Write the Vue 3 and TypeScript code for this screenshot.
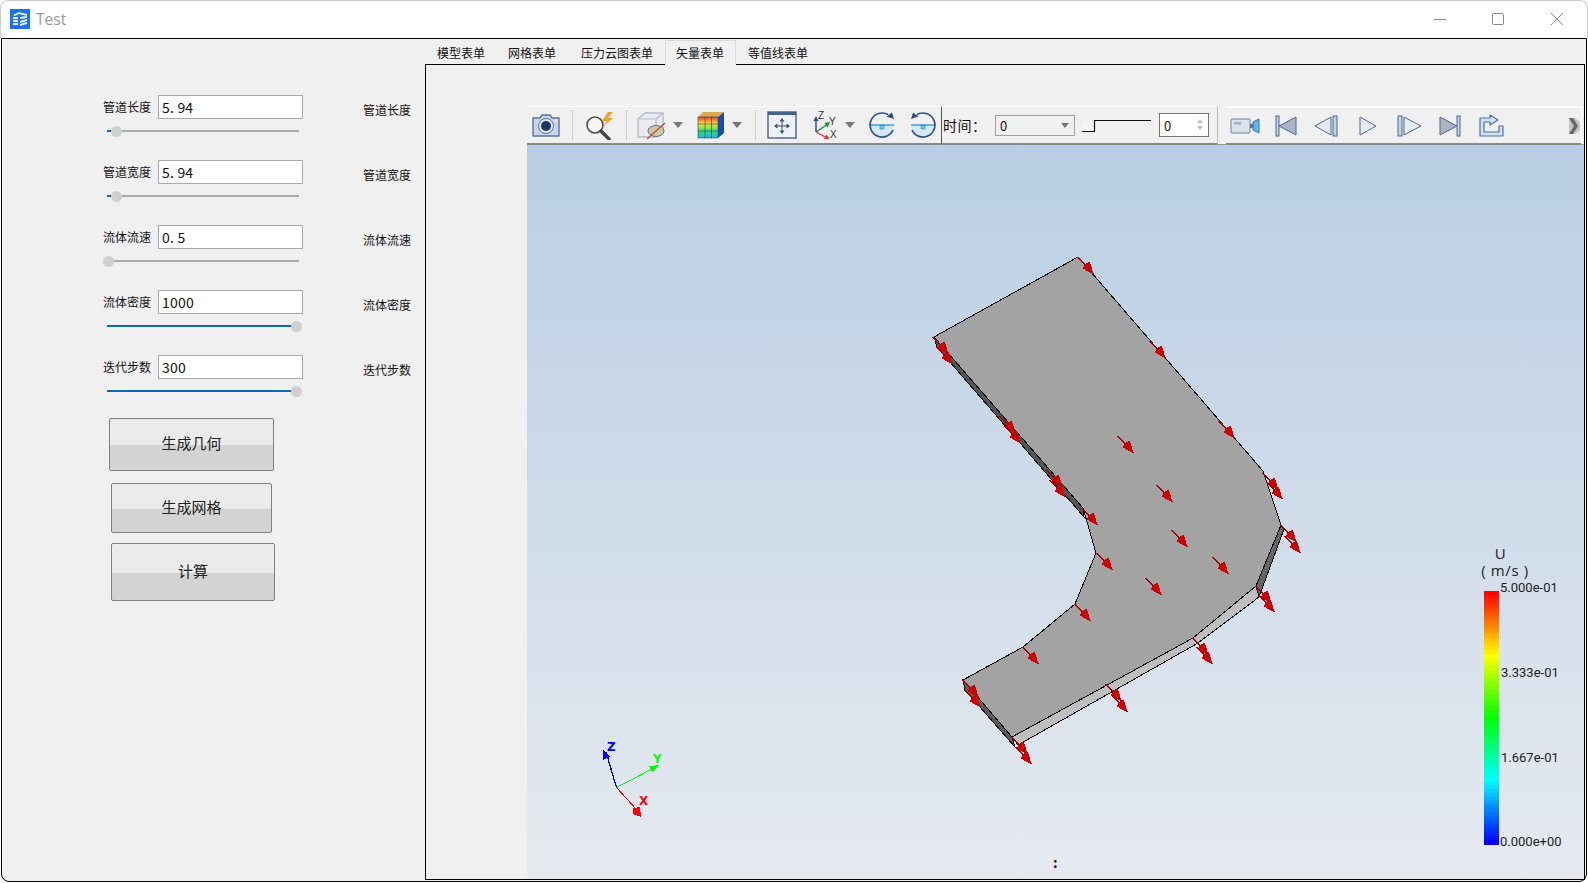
<template>
  <div class="window">
    <header class="titlebar">
      <svg class="app-icon" viewBox="0 0 20 20">
        <rect width="20" height="20" fill="#1a73e8" />
        <path d="M3 6 L9 3 L17 5 L17 7 L9 5 L5 7 Z M3 8 h5 v2 h-5 Z M10 8 L17 7 V9 L10 10 Z M3 11 h5 v2 h-5 Z M10 12 L17 10 V12 L10 14 Z M3 14 h5 v2 h-5 Z M10 15 L17 13 V15 L10 17 Z" fill="#e8f1fd" />
      </svg>
      <span class="app-title">Test</span>
      <div class="win-buttons">
        <svg class="win-min" viewBox="0 0 12 12" width="12" height="12"><path d="M0 6.5 H12" stroke="#8a8a8a" /></svg>
        <svg viewBox="0 0 12 12" width="12" height="12"><rect x="0.5" y="0.5" width="11" height="11" rx="1" fill="none" stroke="#8a8a8a" /></svg>
        <svg viewBox="0 0 12 12" width="12" height="12"><path d="M0 0 L12 12 M12 0 L0 12" stroke="#8a8a8a" /></svg>
      </div>
    </header>

    <main class="client">
      <aside class="side">
        <div class="form">
          <div v-for="row in rows" :key="row.label" class="row">
            <div class="row-top">
              <label class="row-label">{{ row.label }}</label>
              <div class="row-input">{{ row.value }}</div>
              <span class="row-echo">{{ row.label }}</span>
            </div>
            <div class="slider">
              <div class="slider-fill" :style="{ width: row.fill + 'px' }" />
              <div class="slider-knob" :style="{ left: row.knob + 'px' }" />
            </div>
          </div>
        </div>
        <button class="btn btn-geo">生成几何</button>
        <button class="btn btn-mesh">生成网格</button>
        <button class="btn btn-run">计算</button>
      </aside>

      <section class="tabs">
        <nav class="tab-bar">
          <span v-for="tab in tabs" :key="tab" class="tab" :class="{ 'tab--on': tab === '矢量表单' }">{{ tab }}</span>
        </nav>
        <div class="pane">
          <div class="viewer">
            <div class="toolbar">
              <div class="tool-group">
                <span class="tool tool-cam">
                  <svg viewBox="0 0 30 26" width="30" height="26">
                    <path d="M2 6 H9 L11 3 H19 L21 6 H28 V24 H2 Z" fill="#c5d5ea" stroke="#5d7397" stroke-width="1.4" stroke-linejoin="round" />
                    <circle cx="15" cy="14" r="7.5" fill="#dfe8f3" stroke="#5d7397" />
                    <circle cx="15" cy="14" r="5" fill="#1b3768" />
                    <circle cx="25" cy="8.5" r="1" fill="#fff" />
                  </svg>
                </span>
                <i class="sep sep-a" />
                <span class="tool tool-zoom">
                  <svg viewBox="0 0 32 30" width="32" height="30">
                    <circle cx="11" cy="15" r="8" fill="#f4f6f8" stroke="#4d4d4d" stroke-width="1.6" />
                    <path d="M17 21 L25 29" stroke="#444" stroke-width="3.4" stroke-linecap="round" />
                    <path d="M24 2 L18 11 H23 L19 17 L29 8 H24 L29 2 Z" fill="#eda12e" />
                  </svg>
                </span>
                <i class="sep sep-b" />
                <span class="tool tool-box">
                  <svg viewBox="0 0 32 30" width="32" height="30">
                    <path d="M2 9 L9 3 H27 V20 L20 27 H2 Z" fill="#e9ebef" stroke="#b4bccb" stroke-width="1.4" />
                    <path d="M2 9 H20 V27 M20 9 L27 3" fill="none" stroke="#b4bccb" stroke-width="1.2" />
                    <ellipse cx="20" cy="21" rx="8" ry="5.5" fill="#cfc6a2" stroke="#5d7397" />
                    <path d="M11 29 L29 13" stroke="#c9452a" stroke-width="1.2" />
                  </svg>
                </span>
                <span class="caret caret-a" />
                <span class="tool tool-cube">
                  <svg viewBox="0 0 28 28" width="28" height="28">
                    <defs>
                      <linearGradient id="cubeFace" x1="0" y1="0" x2="0" y2="1">
                        <stop offset="0" stop-color="#f0402a" />
                        <stop offset="0.33" stop-color="#fbe32e" />
                        <stop offset="0.66" stop-color="#35e06a" />
                        <stop offset="1" stop-color="#22b4e8" />
                      </linearGradient>
                    </defs>
                    <path d="M1 6 L6 1 H27 L21 6 Z" fill="#e0a84e" />
                    <path d="M21 6 L27 1 V22 L21 27 Z" fill="#1a4bb0" />
                    <rect x="1" y="6" width="20" height="21" fill="url(#cubeFace)" />
                    <path d="M1 13 H21 M1 20 H21 M8 6 V27 M14.5 6 V27 M21 6 V27 M1 6 H21 M1 27 H21 M1 6 V27" stroke="#23406e" stroke-width="0.6" fill="none" />
                  </svg>
                </span>
                <span class="caret caret-b" />
                <i class="sep sep-c" />
                <span class="tool tool-fit">
                  <svg viewBox="0 0 30 28" width="30" height="28">
                    <rect x="1" y="1" width="28" height="26" fill="#eef1f5" stroke="#48618c" stroke-width="1.4" />
                    <rect x="1" y="1" width="28" height="3" fill="#48618c" />
                    <path d="M15 8 V22 M8 15 H22" stroke="#33507f" />
                    <path d="M15 7 L12.5 10.5 H17.5 Z M15 23 L12.5 19.5 H17.5 Z M7 15 L10.5 12.5 V17.5 Z M23 15 L19.5 12.5 V17.5 Z" fill="#33507f" />
                  </svg>
                </span>
                <span class="tool tool-axes">
                  <svg viewBox="0 0 30 30" width="30" height="30">
                    <path d="M8 22 V9" stroke="#1f4aa0" stroke-width="1.4" />
                    <path d="M8 6 L5.5 11 H10.5 Z" fill="#1f4aa0" />
                    <path d="M8 22 L20 14" stroke="#1a8a3a" stroke-width="1.4" />
                    <path d="M22 12 L16.5 13 L19.5 17.5 Z" fill="#1a8a3a" />
                    <path d="M8 22 L19 28" stroke="#e03030" stroke-width="1.4" />
                    <path d="M21.5 29 L16 29 L18.5 24.5 Z" fill="#e03030" />
                    <text x="10" y="9" class="axis-glyph">Z</text>
                    <text x="21" y="15" class="axis-glyph">Y</text>
                    <text x="22" y="28" class="axis-glyph">X</text>
                  </svg>
                </span>
                <span class="caret caret-c" />
                <span class="tool tool-rot">
                  <svg viewBox="0 0 30 30" width="30" height="30">
                    <path d="M3 15 A12 12 0 0 0 27 15 Z" fill="#d4e9f8" />
                    <path d="M13 15 H17 V19 H13 Z" fill="#7fbce8" stroke="#1d86d0" stroke-width="0.6" />
                    <path d="M3 15 H27" stroke="#1d86d0" stroke-width="1.2" />
                    <path d="M21 4.6 A12 12 0 1 0 26 20" fill="none" stroke="#2e4f80" stroke-width="1.7" />
                    <path d="M27 9 L19.5 6.5 L25 2.5 Z" fill="#2e4f80" />
                  </svg>
                </span>
                <span class="tool tool-rot">
                  <svg viewBox="0 0 30 30" width="30" height="30">
                    <path d="M3 15 A12 12 0 0 0 27 15 Z" fill="#d4e9f8" />
                    <path d="M13 15 H17 V19 H13 Z" fill="#7fbce8" stroke="#1d86d0" stroke-width="0.6" />
                    <path d="M3 15 H27" stroke="#1d86d0" stroke-width="1.2" />
                    <path d="M9 4.6 A12 12 0 1 1 4 20" fill="none" stroke="#2e4f80" stroke-width="1.7" />
                    <path d="M3 9 L10.5 6.5 L5 2.5 Z" fill="#2e4f80" />
                  </svg>
                </span>
              </div>
              <div class="time-group">
                <span class="time-label">时间：</span>
                <div class="combo">0<span class="combo-caret" /></div>
                <div class="time-slider">
                  <svg viewBox="0 0 70 14" width="70" height="14">
                    <rect x="0" y="3" width="13" height="10" fill="#f6f6f6" />
                    <path d="M0 13.5 H12.5 V2.5 H69" fill="none" stroke="#111" stroke-width="1.2" />
                  </svg>
                </div>
                <div class="spin">0
                  <span class="spin-arrows"><i class="spin-up" /><i class="spin-down" /></span>
                </div>
              </div>
              <div class="play-group">
                <span class="play">
                  <svg viewBox="0 0 30 18" width="30" height="18">
                    <rect x="1" y="2" width="19" height="14" rx="1" fill="#dbe2ec" stroke="#6a7f9f" />
                    <rect x="4" y="5" width="7" height="2.5" fill="#a3b0c2" />
                    <path d="M20 7 H23 V11 H20 Z" fill="#5d7397" />
                    <path d="M23 5 L29 2 V16 L23 13 Z" fill="#62b5e8" stroke="#3a6ea8" />
                  </svg>
                </span>
                <span class="play">
                  <svg viewBox="0 0 24 22" width="24" height="22">
                    <rect x="2" y="1" width="3" height="20" fill="#c6d2e2" stroke="#4f6a93" />
                    <path d="M5 11 L22 2 V20 Z" fill="#aab5c4" stroke="#4f6a93" />
                  </svg>
                </span>
                <span class="play">
                  <svg viewBox="0 0 26 22" width="26" height="22">
                    <path d="M1 11 L17 2 V20 Z" fill="#e6ebf2" stroke="#4f6a93" />
                    <rect x="19" y="1" width="4" height="20" fill="#c6d2e2" stroke="#4f6a93" />
                  </svg>
                </span>
                <span class="play">
                  <svg viewBox="0 0 20 22" width="20" height="22">
                    <path d="M2 2 L18 11 L2 20 Z" fill="#e6ebf2" stroke="#4f6a93" />
                  </svg>
                </span>
                <span class="play">
                  <svg viewBox="0 0 26 22" width="26" height="22">
                    <rect x="2" y="1" width="4" height="20" fill="#c6d2e2" stroke="#4f6a93" />
                    <path d="M8 2 L25 11 L8 20 Z" fill="#e6ebf2" stroke="#4f6a93" />
                  </svg>
                </span>
                <span class="play">
                  <svg viewBox="0 0 24 22" width="24" height="22">
                    <path d="M2 2 L19 11 L2 20 Z" fill="#aab5c4" stroke="#4f6a93" />
                    <rect x="19" y="1" width="3" height="20" fill="#c6d2e2" stroke="#4f6a93" />
                  </svg>
                </span>
                <span class="play">
                  <svg viewBox="0 0 26 24" width="26" height="24">
                    <path d="M12 1 L20 6 L12 11 V8 H6 V18 H21 V12 H25 V22 H2 V4 H12 Z" fill="#d2e0f0" stroke="#4f73a8" stroke-width="1.2" stroke-linejoin="round" />
                  </svg>
                </span>
                <svg class="grip" viewBox="0 0 11 16" width="11" height="16">
                  <rect width="11" height="16" fill="#c4c4c4" />
                  <path d="M0 0 H4 L9 8 L4 16 H0 L5 8 Z" fill="#666" />
                  <path d="M6 0 H11 V4 Z M6 16 H11 V12 Z" fill="#f0f0f0" />
                </svg>
              </div>
            </div>

            <div class="scene">
              <svg class="scene-svg" viewBox="527 145 1057 734" shape-rendering="crispEdges">
                <polygon :points="sliverLeft" fill="#555" stroke="#111" />
                <polygon :points="sliverEnd" fill="#5c5c5c" stroke="#111" />
                <polygon :points="sideLight" fill="#bfbfbf" stroke="#000" />
                <polygon :points="sideDark" fill="#666" stroke="#000" />
                <polygon :points="topFace" fill="#a3a3a3" stroke="#000" />
                <g v-for="(a, i) in arrows" :key="i" :transform="`translate(${a[0]} ${a[1]})`">
                  <path d="M0 0 L15 17" stroke="#a00000" stroke-width="1.5" />
                  <polygon points="7,7 11.5,5 14,11 15,17 9,14 5,11.5" fill="#cc0000" />
                </g>

                <path d="M616.5 787.5 L606 752" stroke="#0000ff" stroke-width="1.3" />
                <polygon points="603,750 603,760 610,757" fill="#0000ff" />
                <path d="M616.5 787.5 L654 768" stroke="#00ff00" stroke-width="1" />
                <polygon points="660,765 649,766 652,772" fill="#00ff00" />
                <path d="M616.5 787.5 L637 810" stroke="#ff0000" stroke-width="1" />
                <polygon points="633,808 640,807 641,817 633,814" fill="#ff0000" />
                <text x="607" y="751" class="triad" fill="#0000ff">Z</text>
                <text x="653" y="763" class="triad" fill="#00ff00">Y</text>
                <text x="639" y="805" class="triad" fill="#ff0000">X</text>

                <rect v-for="(c, i) in bands" :key="c + i" x="1484" :y="591 + i * bandH" width="15" :height="bandH + 0.5" :fill="c" />
              </svg>
              <div class="legend-head">{{ legendTitle }}</div>
              <span class="tick tick-1">5.000e-01</span>
              <span class="tick tick-2">3.333e-01</span>
              <span class="tick tick-3">1.667e-01</span>
              <span class="tick tick-4">0.000e+00</span>
              <span class="colon">:</span>
            </div>
          </div>
        </div>
      </section>
    </main>
  </div>
</template>

<script setup lang="ts">
interface FormRow {
  label: string;
  value: string;
  fill: number;
  knob: number;
}

const rows: FormRow[] = [
  { label: '管道长度', value: '5. 94', fill: 6, knob: 4 },
  { label: '管道宽度', value: '5. 94', fill: 6, knob: 4 },
  { label: '流体流速', value: '0. 5', fill: 0, knob: -4 },
  { label: '流体密度', value: '1000', fill: 186, knob: 184 },
  { label: '迭代步数', value: '300', fill: 186, knob: 184 },
];

const tabs = ['模型表单', '网格表单', '压力云图表单', '矢量表单', '等值线表单'];

const legendTitle = 'U  \n( m/s )';

const topFace =
  '1078,257 934,337 1083,508 1096,553 1075,604 1023,647 963,680 1012,737 1193,638 1256,586 1281,525 1263,471';
const sliverLeft = '934,337 1083,508 1084,517 937,347';
const sliverEnd = '963,680 1012,737 1015,747 965,690';
const sideLight = '1012,737 1193,638 1256,586 1259,597 1198,643 1018,745';
const sideDark = '1281,525 1256,586 1259,597 1284,529';

const arrows: [number, number][] = [
  [1078, 257], [1150, 341], [1219, 421], [1118, 436], [1157, 485],
  [1263, 473], [1267, 482], [933, 337], [937, 347], [1000, 416],
  [1005, 426], [1047, 470], [1050, 480], [1082, 508], [1172, 530],
  [1097, 553], [1146, 578], [1213, 557], [1075, 604], [1023, 647],
  [963, 680], [965, 690], [1281, 525], [1285, 536], [1256, 586],
  [1259, 595], [1193, 638], [1197, 647], [1106, 684], [1112, 695],
  [1012, 737], [1016, 747],
];

// jet style colour table, red at the top down to blue
const bandCount = 64;
const bandH = 253 / bandCount;
const bands = Array.from({ length: bandCount }, (_, i) => {
  const hue = Math.round((i / (bandCount - 1)) * 240);
  return `hsl(${hue} 100% 50%)`;
});
</script>

<style>
html,
body {
  margin: 0;
  background: #fff;
}
</style>

<style scoped>
.window {
  width: 1588px;
  height: 883px;
  display: flex;
  flex-direction: column;
  box-sizing: border-box;
  overflow: hidden;
  background: #fff;
  font-family: "Noto Sans CJK SC", "Liberation Sans", sans-serif;
  color: #111;
}

.titlebar {
  height: 38px;
  flex: none;
  display: flex;
  align-items: center;
  box-sizing: border-box;
  padding: 0 24px 1px 9px;
  border: 1px solid #cfcfcf;
  border-bottom: 0;
  border-radius: 8px 8px 0 0;
}

.app-icon {
  width: 20px;
  height: 20px;
}

.app-title {
  margin-left: 6px;
  font-family: "Open Sans", "Liberation Sans", sans-serif;
  font-size: 15.5px;
  color: #9a9a9a;
}

.win-buttons {
  margin-left: auto;
  display: flex;
  gap: 47px;
}

.win-min {
  margin-right: -1px;
}

.client {
  flex: 1;
  min-height: 0;
  display: flex;
  margin: 0 1px 1px;
  border: 1px solid #000;
  border-radius: 0 0 8px 8px;
  background: #f0f0f0;
}

.side {
  width: 423px;
  flex: none;
  box-sizing: border-box;
  padding-top: 56px;
}

.form {
  height: 323px;
}

.row {
  height: 65px;
  box-sizing: border-box;
}

.row-top {
  display: flex;
  align-items: center;
  height: 24px;
  padding-left: 101px;
}

.row-label {
  width: 55px;
  font-size: 12px;
  line-height: 24px;
  white-space: nowrap;
}

.row-input {
  width: 145px;
  height: 24px;
  box-sizing: border-box;
  border: 1px solid #a9a9a9;
  background: #fff;
  padding: 0 3px;
  font-size: 14px;
  letter-spacing: 0.2px;
  line-height: 22px;
}

.row-echo {
  margin-left: 60px;
  margin-top: 4px;
  font-size: 12px;
  white-space: nowrap;
}

.slider {
  position: relative;
  margin: 11px 0 0 105px;
  width: 192px;
  height: 2px;
  background: #aaa;
}

.slider-fill {
  position: absolute;
  left: 0;
  top: 0;
  height: 2px;
  background: #0f67b8;
}

.slider-knob {
  position: absolute;
  top: -4.5px;
  width: 11px;
  height: 11px;
  border-radius: 50%;
  background: #cfcfcf;
}

.btn {
  display: block;
  box-sizing: border-box;
  padding: 0 0 4px;
  border: 1px solid #808080;
  border-radius: 2px;
  font-family: inherit;
  font-size: 15px;
  color: #222;
}

.btn-geo {
  width: 165px;
  height: 53px;
  margin: 0 0 12px 107px;
  background: linear-gradient(#ebebeb 50%, #d3d3d3 50%);
}

.btn-mesh {
  width: 161px;
  height: 50px;
  margin: 0 0 10px 109px;
  background: linear-gradient(#ebebeb 52%, #d3d3d3 52%);
}

.btn-run {
  width: 164px;
  height: 58px;
  margin-left: 109px;
  background: linear-gradient(#ebebeb 52%, #d3d3d3 52%);
}

.tabs {
  flex: 1;
  min-width: 0;
  display: flex;
  flex-direction: column;
}

.tab-bar {
  height: 25px;
  flex: none;
  box-sizing: border-box;
  display: flex;
  align-items: flex-end;
}

.tab {
  height: 24px;
  box-sizing: border-box;
  padding: 0 12px;
  font-size: 12px;
  line-height: 25px;
  white-space: nowrap;
}

.tab:nth-child(2) {
  padding: 0 13px 0 11px;
}

.tab--on {
  background: #f0f0f0;
  border: 1px solid #d9d9d9;
  border-bottom: 0;
  height: 25px;
  padding: 0 11px 0 10px;
  line-height: 23px;
  position: relative;
  z-index: 1;
  margin-bottom: -1px;
}

.pane {
  flex: 1;
  min-height: 0;
  display: flex;
  border: 1px solid #000;
  margin: 0 1px 1px 0;
  padding: 41px 0 0 101px;
}

.viewer {
  flex: 1;
  min-width: 0;
  display: flex;
  flex-direction: column;
}

.toolbar {
  height: 39px;
  flex: none;
  display: flex;
  align-items: stretch;
  box-sizing: border-box;
  box-shadow: inset 0 -1px 0 #9a9a9a;
}

.tool-group {
  width: 415px;
  flex: none;
  display: flex;
  align-items: center;
  border-top: 1px solid #fff;
  border-bottom: 2px solid #8a8a8a;
  box-sizing: border-box;
  border-right: 1px solid #555;
}

.tool {
  display: flex;
  flex: none;
}

.sep {
  flex: none;
  width: 1px;
  height: 30px;
  background: #cdcdcd;
}

.tool-cam { margin-left: 4px; }
.sep-a { margin-left: 11px; }
.tool-zoom { margin-left: 11px; }
.sep-b { margin-left: 10px; }
.tool-box { margin-left: 9px; }
.tool-cube { margin-left: 14px; }
.sep-c { margin-left: 13px; }
.tool-fit { margin-left: 11px; }
.tool-axes { margin-left: 11px; }
.tool-rot { margin-left: 12px; }
.tool-rot + .tool-rot { margin-left: 11px; }

.caret {
  flex: none;
  width: 0;
  height: 0;
  margin-left: 5px;
  border-left: 5px solid transparent;
  border-right: 5px solid transparent;
  border-top: 6px solid #777;
}

.caret-b,
.caret-c {
  margin-left: 7px;
}

.time-group {
  width: 276px;
  flex: none;
  display: flex;
  align-items: center;
  box-sizing: border-box;
  padding-left: 1px;
  border-top: 1px solid #fff;
  border-bottom: 2px solid #8a8a8a;
  border-right: 1px solid #bbb;
}

.time-label {
  width: 52px;
  font-size: 14px;
  letter-spacing: 0.5px;
  white-space: nowrap;
}

.combo {
  position: relative;
  width: 80px;
  height: 21px;
  box-sizing: border-box;
  border: 1px solid #a0a0a0;
  padding-left: 4px;
  font-size: 13px;
  line-height: 20px;
}

.combo-caret {
  position: absolute;
  right: 5px;
  top: 7px;
  border-left: 4px solid transparent;
  border-right: 4px solid transparent;
  border-top: 5px solid #777;
}

.time-slider {
  display: flex;
  margin-left: 7px;
}

.spin {
  position: relative;
  width: 50px;
  height: 24px;
  box-sizing: border-box;
  margin-left: 7px;
  border: 1px solid #777;
  background: #fff;
  padding-left: 4px;
  font-size: 13px;
  line-height: 23px;
}

.spin-arrows {
  position: absolute;
  right: 5px;
  top: 5px;
  display: flex;
  flex-direction: column;
  gap: 3px;
}

.spin-up {
  border-left: 3px solid transparent;
  border-right: 3px solid transparent;
  border-bottom: 4px solid #bbb;
}

.spin-down {
  border-left: 3px solid transparent;
  border-right: 3px solid transparent;
  border-top: 4px solid #bbb;
}

.play-group {
  flex: 1;
  min-width: 0;
  display: flex;
  align-items: center;
  margin-left: 8px;
  margin-right: 2px;
  border-top: 2px solid #fff;
  border-bottom: 2px solid #8a8a8a;
  border-right: 1px solid #fff;
  box-sizing: border-box;
}

.play {
  display: flex;
  flex: none;
  width: 41px;
  justify-content: center;
}

.play:first-child {
  margin-left: -2px;
}

.grip {
  flex: none;
  margin-left: auto;
  margin-right: 1px;
}

.axis-glyph {
  font-family: "Liberation Sans", sans-serif;
  font-size: 10px;
  fill: #333;
}

.scene {
  position: relative;
  flex: 1;
  min-height: 0;
  background: linear-gradient(#b9cee4, #e6eaf0);
}

.scene-svg {
  position: absolute;
  inset: 0;
  width: 100%;
  height: 100%;
}

.triad {
  font-family: "DejaVu Sans", sans-serif;
  font-size: 12px;
  font-weight: 700;
}

.legend-head {
  position: absolute;
  left: 948px;
  top: 400px;
  width: 60px;
  font-family: "Open Sans", sans-serif;
  font-size: 15px;
  letter-spacing: 0.6px;
  line-height: 16.5px;
  text-align: center;
  white-space: pre;
  color: #222;
}

.tick {
  position: absolute;
  font-family: Roboto, sans-serif;
  font-size: 13px;
  line-height: 14px;
  color: #222;
}

.tick-1 { left: 973px; top: 436px; }
.tick-2 { left: 974px; top: 521px; }
.tick-3 { left: 974px; top: 606px; }
.tick-4 { left: 973px; top: 690px; }

.colon {
  position: absolute;
  left: 526px;
  top: 709px;
  font-size: 14px;
  line-height: 16px;
  font-weight: 700;
  color: #000;
}
</style>
